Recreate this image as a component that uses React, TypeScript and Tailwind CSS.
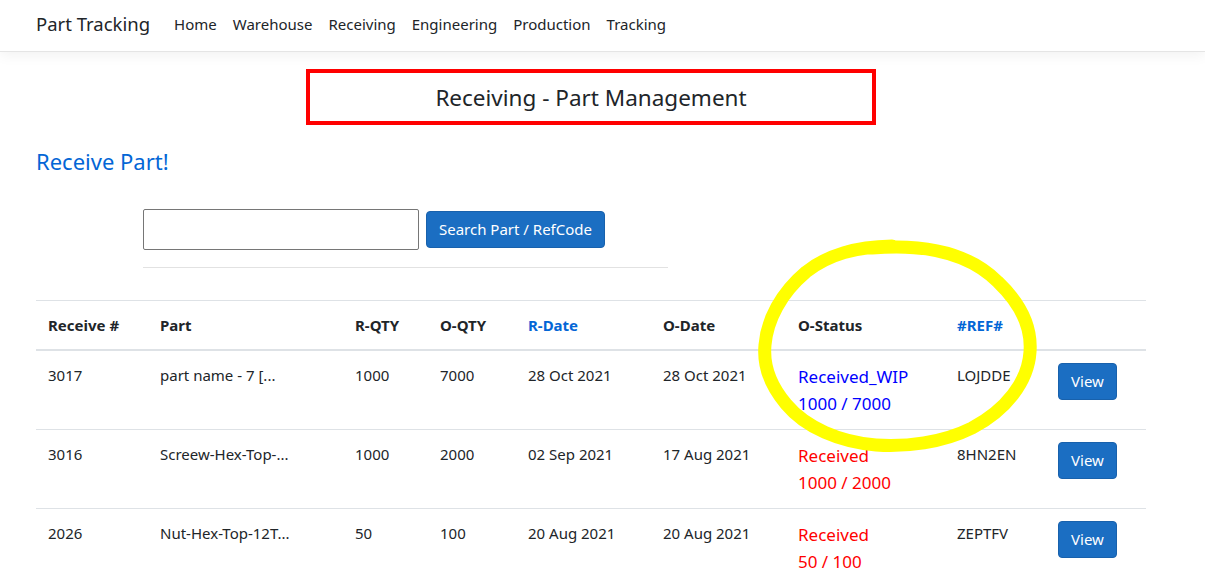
import React from 'react';

const font = { fontFamily: '"Noto Sans", "Segoe UI", Arial, sans-serif' };

const navLinks = ['Home', 'Warehouse', 'Receiving', 'Engineering', 'Production', 'Tracking'];

type Row = {
  id: string;
  part: string;
  rqty: string;
  oqty: string;
  rdate: string;
  odate: string;
  status: string;
  progress: string;
  wip: boolean;
  ref: string;
};

const rows: Row[] = [
  { id: '3017', part: 'part name - 7 [...', rqty: '1000', oqty: '7000', rdate: '28 Oct 2021', odate: '28 Oct 2021', status: 'Received_WIP', progress: '1000 / 7000', wip: true, ref: 'LOJDDE' },
  { id: '3016', part: 'Screew-Hex-Top-...', rqty: '1000', oqty: '2000', rdate: '02 Sep 2021', odate: '17 Aug 2021', status: 'Received', progress: '1000 / 2000', wip: false, ref: '8HN2EN' },
  { id: '2026', part: 'Nut-Hex-Top-12T...', rqty: '50', oqty: '100', rdate: '20 Aug 2021', odate: '20 Aug 2021', status: 'Received', progress: '50 / 100', wip: false, ref: 'ZEPTFV' },
];

export default function App() {
  return (
    <div className="relative min-h-[577px] overflow-hidden bg-white text-[#212529]" style={font}>
      {/* Navbar */}
      <nav className="flex h-[52px] items-center border-b border-[#e5e5e5] px-9 pb-[2px] shadow-[0_4px_12px_rgba(0,0,0,0.05)]">
        <span className="mr-4 text-[18.5px] leading-none">Part Tracking</span>
        <div className="flex items-center">
          {navLinks.map((l) => (
            <a key={l} className="px-2 text-[15px] text-[#212529]">
              {l}
            </a>
          ))}
        </div>
      </nav>

      <main className="ml-9 w-[1110px]">
        {/* Title */}
        <div className="mx-auto mt-[17px] flex h-[56px] w-[570px] items-center justify-center border-4 border-[#ff0000] pt-[3px]">
          <h4 className="text-[22.5px] leading-none">Receiving - Part Management</h4>
        </div>

        <h3 className="mt-[21px] text-[22px] leading-[30px] text-[#0366d6]">Receive Part!</h3>

        {/* Search */}
        <div className="ml-[107px] mt-[33px] w-[525px]">
          <div className="flex items-center gap-[7px]">
            <input className="h-[41px] w-[276px] rounded-[2px] border border-[#767676] px-2 outline-none" />
            <button className="h-[37px] w-[179px] rounded-[4px] border border-[#1861ac] bg-[#1b6ec2] text-[15px] text-white">
              Search Part / RefCode
            </button>
          </div>
          <div className="mt-[17px] h-px bg-[#e2e2e2]" />
        </div>

        {/* Table */}
        <table className="mt-[32px] w-[1110px] table-fixed border-collapse text-[15px]">
          <colgroup>
            <col className="w-[112px]" />
            <col className="w-[195px]" />
            <col className="w-[85px]" />
            <col className="w-[88px]" />
            <col className="w-[135px]" />
            <col className="w-[135px]" />
            <col className="w-[159px]" />
            <col className="w-[101px]" />
            <col className="w-[100px]" />
          </colgroup>
          <thead>
            <tr className="border-t border-b-2 border-t-[#dee2e6] border-b-[#dee2e6] text-left">
              <th className="px-3 py-3 font-bold leading-6">Receive #</th>
              <th className="px-3 py-3 font-bold leading-6">Part</th>
              <th className="px-3 py-3 font-bold leading-6">R-QTY</th>
              <th className="px-3 py-3 font-bold leading-6">O-QTY</th>
              <th className="px-3 py-3 font-bold leading-6 text-[#0366d6]">R-Date</th>
              <th className="px-3 py-3 font-bold leading-6">O-Date</th>
              <th className="px-3 py-3 font-bold leading-6">O-Status</th>
              <th className="px-3 py-3 font-bold leading-6 text-[#0366d6]">#REF#</th>
              <th className="px-3 py-3" />
            </tr>
          </thead>
          <tbody>
            {rows.map((r) => (
              <tr key={r.id} className="border-b border-[#dee2e6] align-top">
                <td className="px-3 py-3 leading-6">{r.id}</td>
                <td className="px-3 py-3 leading-6">{r.part}</td>
                <td className="px-3 py-3 leading-6">{r.rqty}</td>
                <td className="px-3 py-3 leading-6">{r.oqty}</td>
                <td className="px-3 py-3 leading-6">{r.rdate}</td>
                <td className="px-3 py-3 leading-6">{r.odate}</td>
                <td className={`px-3 py-3 text-[17px] leading-[27px] ${r.wip ? 'text-[#0000ff]' : 'text-[#ff0000]'}`}>
                  <div>{r.status}</div>
                  <div>{r.progress}</div>
                </td>
                <td className="px-3 py-3 leading-6">{r.ref}</td>
                <td className="px-3 py-3">
                  <button className="h-[37px] w-[59px] rounded-[4px] border border-[#1861ac] bg-[#1b6ec2] text-white">
                    View
                  </button>
                </td>
              </tr>
            ))}
          </tbody>
        </table>
      </main>

      {/* Hand-drawn highlight */}
      <svg className="pointer-events-none absolute left-0 top-0" width="1205" height="577" viewBox="0 0 1205 577">
        <path
          d="M 872 248 C 930 243 972 256 998 282 C 1020 303 1032 326 1030 352 C 1028 382 1006 410 972 428 C 942 443 906 447 876 445 C 840 442 806 428 786 404 C 770 385 763 366 765 345 C 767 320 781 293 806 272 C 829 254 856 247 892 246"
          fill="none"
          stroke="#ffff00"
          strokeWidth="13"
          strokeLinecap="round"
          strokeLinejoin="round"
        />
      </svg>
    </div>
  );
}
